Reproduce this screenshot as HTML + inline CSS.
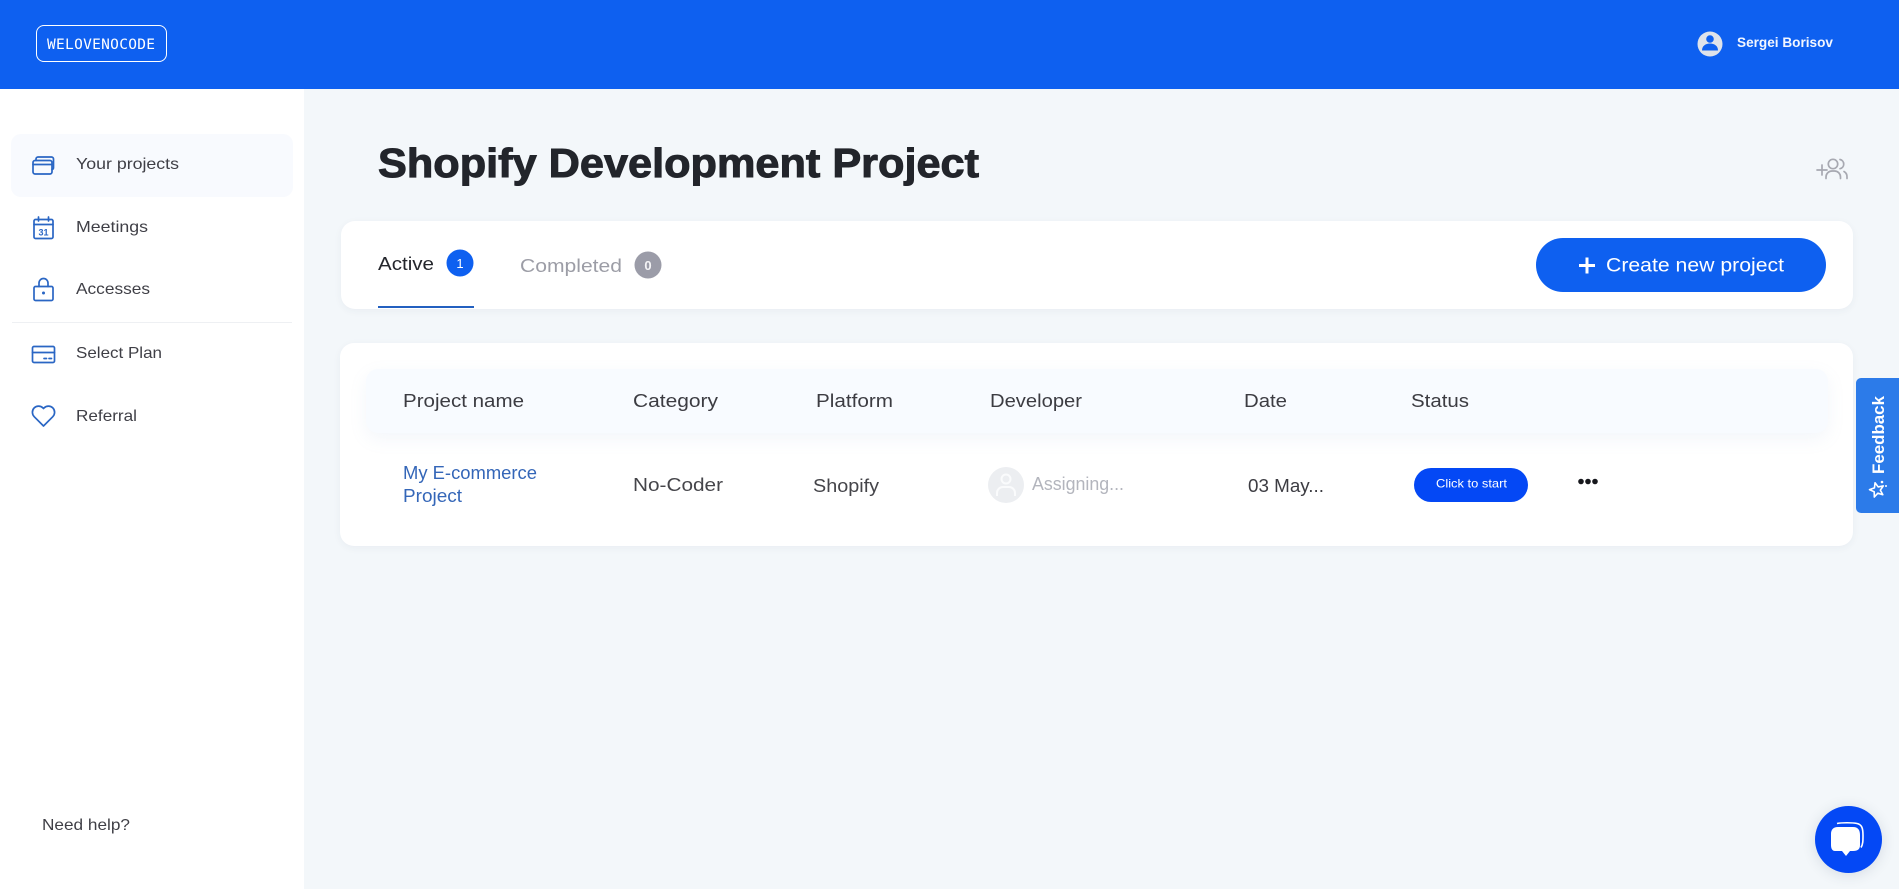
<!DOCTYPE html>
<html lang="en">
<head>
<meta charset="utf-8">
<title>Shopify Development Project</title>
<style>
html,body{margin:0;padding:0;width:1899px;height:889px;overflow:hidden;background:#f3f7fa;font-family:"Liberation Sans",sans-serif}
.b{position:absolute;box-sizing:border-box}
svg.o{position:absolute;left:0;top:0}
svg text{font-family:"Liberation Sans",sans-serif}
</style>
</head>
<body>
<div class="b" style="left:0;top:89px;width:304px;height:800px;background:#fff"></div>
<div class="b" style="left:0;top:0;width:1899px;height:89px;background:#0e60f0"></div>
<div class="b" style="left:36px;top:25px;width:131px;height:37px;border:1px solid #fff;border-radius:8px"></div>
<div class="b" style="left:11px;top:134px;width:282px;height:63px;border-radius:10px;background:#f8fafe"></div>
<div class="b" style="left:12px;top:322px;width:280px;height:1px;background:#eef0f3"></div>
<div class="b" style="left:341px;top:221px;width:1512px;height:88px;border-radius:14px;background:#fff;box-shadow:0 2px 8px rgba(40,60,90,.05)"></div>
<div class="b" style="left:378px;top:306px;width:96px;height:2px;background:#2360c0"></div>
<div class="b" style="left:1536px;top:238px;width:290px;height:54px;border-radius:27px;background:#0e60f0"></div>
<div class="b" style="left:340px;top:343px;width:1513px;height:203px;border-radius:14px;background:#fff;box-shadow:0 2px 8px rgba(40,60,90,.05)"></div>
<div class="b" style="left:366px;top:369px;width:1462px;height:64px;border-radius:12px;background:#f8fbff;box-shadow:0 6px 18px rgba(120,150,200,.09)"></div>
<div class="b" style="left:1414px;top:468px;width:114px;height:34px;border-radius:17px;background:#0448f5"></div>
<div class="b" style="left:1856px;top:378px;width:43px;height:135px;border-radius:5px 0 0 5px;background:#2c7be9"></div>
<div class="b" style="left:1815px;top:806px;width:67px;height:67px;border-radius:50%;background:#0448f5;box-shadow:0 2px 14px rgba(40,60,90,.14)"></div>

<svg class="o" width="1899" height="889" viewBox="0 0 1899 889" xmlns="http://www.w3.org/2000/svg">
  <!-- header -->
  <text x="47" y="49" font-size="14.500" fill="#fff" style="font-family:'DejaVu Sans Mono',monospace" textLength="108" lengthAdjust="spacing">WELOVENOCODE</text>
  <circle cx="1710" cy="44" r="12.500" fill="#dfe3ea"/>
  <circle cx="1710" cy="39" r="3.800" fill="#0e60f0"/>
  <path d="M1702 50.500c0-4.500 3.500-7 8-7s8 2.500 8 7z" fill="#0e60f0"/>
  <text x="1737" y="47" font-size="13.500" font-weight="700" fill="#f2f6ff" textLength="96" lengthAdjust="spacingAndGlyphs">Sergei Borisov</text>

  <!-- sidebar icons -->
  <g fill="none" stroke="#2a66c4" stroke-width="1.700" stroke-linejoin="round" stroke-linecap="round">
    <rect x="33" y="160.500" width="19" height="13.500" rx="2"/>
    <path d="M33 164.500h19"/>
    <path d="M36 160.500v-1.500a2 2 0 0 1 2-2h13.500a2 2 0 0 1 2 2v8.500a2 2 0 0 1-1.500 2"/>
    <rect x="34" y="219.500" width="19" height="19" rx="1.500"/>
    <path d="M34 224.500h19M38.500 217v4M48.500 217v4"/>
    <rect x="34" y="286.500" width="19" height="14" rx="1.500"/>
    <path d="M39 286.500v-3.500a4.500 4.500 0 0 1 9 0v3.500"/>
    <rect x="32.500" y="346.500" width="22" height="16" rx="1.500"/>
    <path d="M32.500 352.500h22M44 358.500h2.500M49 358.500h2.500"/>
    <path d="M43.500 426l-9.300-9.300a6.300 6.300 0 0 1 0-8.800 6.200 6.200 0 0 1 8.700 0l.6.6.6-.6a6.200 6.200 0 0 1 8.700 0 6.300 6.300 0 0 1 0 8.800z"/>
  </g>
  <text x="43.500" y="235.500" font-size="9" font-weight="700" fill="#2a66c4" text-anchor="middle">31</text>
  <circle cx="43.500" cy="293" r="1.500" fill="#2a66c4"/>

  <!-- sidebar text -->
  <g font-size="15.800" fill="#3f3f46">
    <text x="76" y="169" textLength="103" lengthAdjust="spacingAndGlyphs">Your projects</text>
    <text x="76" y="232" textLength="72" lengthAdjust="spacingAndGlyphs">Meetings</text>
    <text x="76" y="294" textLength="74" lengthAdjust="spacingAndGlyphs">Accesses</text>
    <text x="76" y="358" textLength="86" lengthAdjust="spacingAndGlyphs">Select Plan</text>
    <text x="76" y="421" textLength="61" lengthAdjust="spacingAndGlyphs">Referral</text>
    <text x="42" y="830" textLength="88" lengthAdjust="spacingAndGlyphs">Need help?</text>
  </g>

  <!-- title -->
  <text x="378" y="177" font-size="41" font-weight="700" fill="#22252b" stroke="#22252b" stroke-width="1" textLength="601" lengthAdjust="spacingAndGlyphs">Shopify Development Project</text>
  <g fill="none" stroke="#a7a9b1" stroke-width="1.700" stroke-linecap="round">
    <path d="M1817 170h10M1822 165v10"/>
    <circle cx="1833" cy="164" r="4.700"/>
    <path d="M1826 178.500v-1.500a6 6 0 0 1 6-6h2.500a6 6 0 0 1 6 6v1.500"/>
    <path d="M1840 159.500a4.700 4.700 0 0 1 0 9.200M1844 171.500a6 6 0 0 1 3 5.500v1.500"/>
  </g>

  <!-- tabs -->
  <text x="378" y="270" font-size="18" fill="#24262c" textLength="56" lengthAdjust="spacingAndGlyphs">Active</text>
  <circle cx="460" cy="263" r="13.500" fill="#0e60f0"/>
  <text x="460" y="268" font-size="13" fill="#fff" text-anchor="middle">1</text>
  <text x="520" y="272" font-size="18" fill="#9c9da6" textLength="102" lengthAdjust="spacingAndGlyphs">Completed</text>
  <circle cx="648" cy="265" r="13.500" fill="#9b9ca8"/>
  <text x="648" y="270" font-size="13" font-weight="700" fill="#f4f4f6" text-anchor="middle">0</text>
  <path d="M1587 257.500v16M1579 265.500h16" stroke="#fff" stroke-width="3"/>
  <text x="1606" y="271.500" font-size="19" fill="#fff" textLength="178" lengthAdjust="spacingAndGlyphs">Create new project</text>

  <!-- table header -->
  <g font-size="18" fill="#3c3c42">
    <text x="403" y="407" textLength="121" lengthAdjust="spacingAndGlyphs">Project name</text>
    <text x="633" y="407" textLength="85" lengthAdjust="spacingAndGlyphs">Category</text>
    <text x="816" y="407" textLength="77" lengthAdjust="spacingAndGlyphs">Platform</text>
    <text x="990" y="407" textLength="92" lengthAdjust="spacingAndGlyphs">Developer</text>
    <text x="1244" y="407" textLength="43" lengthAdjust="spacingAndGlyphs">Date</text>
    <text x="1411" y="407" textLength="58" lengthAdjust="spacingAndGlyphs">Status</text>
  </g>

  <!-- row -->
  <text x="403" y="479" font-size="18" fill="#3466b8" textLength="134" lengthAdjust="spacingAndGlyphs">My E-commerce</text>
  <text x="403" y="502" font-size="18" fill="#3466b8" textLength="59" lengthAdjust="spacingAndGlyphs">Project</text>
  <text x="633" y="491" font-size="18" fill="#45454a" textLength="90" lengthAdjust="spacingAndGlyphs">No-Coder</text>
  <text x="813" y="492" font-size="18" fill="#45454a" textLength="66" lengthAdjust="spacingAndGlyphs">Shopify</text>
  <circle cx="1006" cy="485" r="18" fill="#eceef1"/>
  <g fill="none" stroke="#fafbfc" stroke-width="2">
    <circle cx="1006" cy="479" r="4.500"/>
    <path d="M997 496v-3a6 6 0 0 1 6-6h6a6 6 0 0 1 6 6v3"/>
  </g>
  <text x="1032" y="490" font-size="18" fill="#b3b5bd" textLength="92" lengthAdjust="spacingAndGlyphs">Assigning...</text>
  <text x="1248" y="492" font-size="18" fill="#3c3c42" textLength="76" lengthAdjust="spacingAndGlyphs">03 May...</text>
  <text x="1436" y="487.500" font-size="12" fill="#fff" textLength="71" lengthAdjust="spacingAndGlyphs">Click to start</text>
  <circle cx="1581" cy="481.500" r="2.800" fill="#16171c"/>
  <circle cx="1588" cy="481.500" r="2.800" fill="#16171c"/>
  <circle cx="1595" cy="481.500" r="2.800" fill="#16171c"/>

  <!-- feedback -->
  <text transform="translate(1884 474) rotate(-90)" font-size="17" font-weight="700" fill="#fff" textLength="78" lengthAdjust="spacingAndGlyphs">Feedback</text>
  <path transform="translate(1877 490) rotate(-15)" d="M0-7.500L1.940-2.670 7.130-2.320 3.140 1.020 4.410 6.070 0 3.300-4.410 6.070-3.140 1.020-7.130-2.320-1.940-2.670z" fill="none" stroke="#fff" stroke-width="1.600" stroke-linejoin="round"/>
  <circle cx="1882" cy="482" r="1.300" fill="#fff"/>
  <circle cx="1886" cy="486" r="1" fill="#fff"/>

  <!-- chat -->
  <path d="M1837 823.500c5-1 15-1 20 0s6 5 6 12c0 5 0 9-2 12" fill="none" stroke="#fff" stroke-width="1.600"/>
  <path d="M1838 827h15c5 0 7 3 7 8v10c0 4-2 6-7 6h-3l-4 5-4-5h-7c-3 0-4-3-4-6v-11c0-4 2-7 7-7z" fill="#fff"/>
</svg>
</body>
</html>
